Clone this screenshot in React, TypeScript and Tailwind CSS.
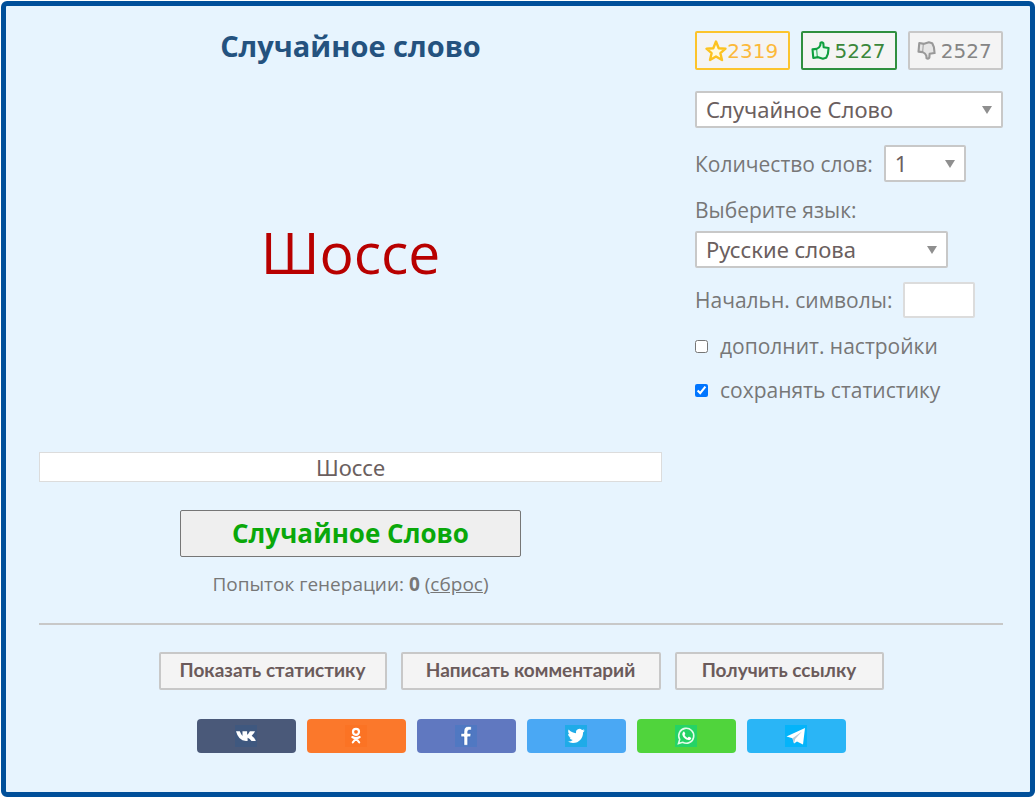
import { useState } from "react";
import type { ReactNode } from "react";

const LANGUAGES = ["Русские слова", "Английские слова"];

const selectClass =
  "h-[37px] w-full appearance-none rounded-xs border-2 border-[#c8c8c8] bg-white pb-[2px] pl-[9px] pr-7 font-['Noto_Sans',sans-serif] text-[22px] text-[#6b5f5f]";

function SelectBox({
  id,
  label,
  options,
  className,
}: {
  id: string;
  label?: string;
  options: string[];
  className: string;
}) {
  return (
    <div className={`relative ${className}`}>
      <select id={id} aria-label={label} className={selectClass}>
        {options.map((option) => (
          <option key={option}>{option}</option>
        ))}
      </select>
      <svg
        viewBox="0 0 10 8"
        className="pointer-events-none absolute right-[11px] top-[15px] h-2 w-[10px] fill-[#8f8f8f]"
      >
        <path d="M0 0h10L5 8z" />
      </svg>
    </div>
  );
}

function VoteButton({ label, className, children }: { label: string; className: string; children: ReactNode }) {
  return (
    <button
      aria-label={label}
      className={`flex h-[39px] flex-1 items-center justify-center rounded-xs border-2 bg-[#f4f4f4] pr-[2px] font-['DejaVu_Sans',sans-serif] text-[20px] ${className}`}
    >
      {children}
    </button>
  );
}

function ThumbIcon({ className, fill }: { className: string; fill: string }) {
  return (
    <svg viewBox="0 0 20 20" className={className} fill="none" stroke="currentColor" strokeWidth="2.2" strokeLinejoin="round">
      <path
        d="M1.600 8.800 6 8.300Q9 7.200 9.800 4.500L10 2Q11.500.9 13 2.400L13.300 6.600 18.500 7.300 17.800 13.500 16 17.600 12.500 18.600 7.500 17 2.400 17.800Z"
        fill={fill}
      />
      <path d="M6 8.600 6.600 16.800" strokeWidth="1" />
    </svg>
  );
}

const SHARES = [
  {
    name: "ВКонтакте",
    button: "bg-[#4a5979]",
    tile: "bg-[#3f587f]",
    icon: (
      <path
        fill="#fff"
        d="M1 6.2h3.8q1.4 3.600 2.700 4.700V6.200h4.600v3.500q1.300-.7 2.800-3.500H20q-.7 2-3.300 4.600 3.200 2 4.100 5.200h-4.300q-1.600-2.500-3.900-3.200V16h-1.700Q3.500 15.800 1 6.200Z"
      />
    ),
  },
  {
    name: "Одноклассники",
    button: "bg-[#fb782b]",
    tile: "bg-[#fb7324]",
    icon: (
      <g fill="none" stroke="#fff" strokeLinecap="round">
        <circle cx="11" cy="6.8" r="3" strokeWidth="2.2" />
        <path d="M7.3 12q3.7 2.3 7.4 0M11 13.4 7.8 17.4M11 13.4l3.2 4" strokeWidth="2.1" />
      </g>
    ),
  },
  {
    name: "Facebook",
    button: "bg-[#6078c0]",
    tile: "bg-[#5078c2]",
    icon: (
      <path
        fill="#fff"
        stroke="#285fb0"
        strokeWidth=".5"
        d="M9 20.300v-8.500H6V8.400h3V6.200Q9 1.500 13.200 1.500h3.100v3.500h-2.100q-1.500 0-1.500 1.500v1.900H16l-.5 3.400h-2.800v8.500Z"
      />
    ),
  },
  {
    name: "Twitter",
    button: "bg-[#4aa8f4]",
    tile: "bg-[#1fabe8]",
    icon: (
      <path
        fill="#fff"
        transform="translate(2.5 2.3) scale(.72)"
        d="M23.95 4.57a10 10 0 0 1-2.82.77 4.96 4.96 0 0 0 2.16-2.72c-.95.55-2 .95-3.13 1.18a4.92 4.92 0 0 0-8.38 4.48C7.69 8.09 4.07 6.13 1.64 3.16a4.82 4.82 0 0 0-.67 2.48c0 1.71.87 3.21 2.19 4.1a4.9 4.9 0 0 1-2.23-.62v.06a4.92 4.92 0 0 0 3.95 4.83 5 5 0 0 1-2.21.08 4.94 4.94 0 0 0 4.6 3.42A9.87 9.87 0 0 1 0 19.54a13.99 13.99 0 0 0 7.56 2.21c9.05 0 14-7.5 14-13.98 0-.21 0-.42-.02-.63a9.94 9.94 0 0 0 2.41-2.57Z"
      />
    ),
  },
  {
    name: "WhatsApp",
    button: "bg-[#50d43c]",
    tile: "bg-[#25d366]",
    icon: (
      <>
        <path
          fill="none"
          stroke="#e4fbe9"
          strokeWidth="1.6"
          d="M3.5 18.5l1.2-4.1a7.5 7.5 0 1 1 2.9 2.9Z"
        />
        <path
          fill="#fff"
          d="M8.6 6.6q.5-.3.8.2l.9 2q.1.4-.8 1.3 1.1 2 3 2.8l1.1-1.1q.3-.2.6 0l1.8.9q.4.3.1 1-.8 1.7-2.6 1.4Q8.700 14.200 7.300 9.700 7 7.800 8.600 6.600Z"
        />
      </>
    ),
  },
  {
    name: "Telegram",
    button: "bg-[#2ab5f6]",
    tile: "bg-[#04b4fa]",
    icon: (
      <>
        <path fill="#fff" d="M1.500 11.500 20 3 18 19.500 12 16.500 9 18.500 7.500 13.200Z" />
        <path fill="#b9cbd8" d="M7.500 13.200 17 6.500 10.200 14 9 18.500Z" />
      </>
    ),
  },
];

const footerButton =
  "h-[38px] rounded-xs border-2 border-[#c8c8c8] bg-[#f4f4f4] pb-[2px] font-['Lato','Noto_Sans',sans-serif] text-[19px] font-bold text-[#6b5b5b]";

export default function App() {
  const [word] = useState("Шоссе");
  const [attempts, setAttempts] = useState(0);
  const [extra, setExtra] = useState(false);
  const [keepStats, setKeepStats] = useState(true);

  return (
    <div className="bg-white pl-px pt-px font-['Open_Sans','Noto_Sans',sans-serif] text-[#777]">
      <main className="rounded-md border-5 border-[#004f9a] bg-[#e7f4fe] pb-[39px] pl-[33px] pr-[27px] pt-[25px]">
        <div className="flex gap-[33px] border-b-2 border-[#c8c8c8] pb-[25px]">
          <section className="flex min-w-0 flex-1 flex-col items-center">
            <h1 className="text-[29px] font-bold leading-[30px] text-[#24527f]">Случайное слово</h1>
            <div className="flex h-[391px] items-center pb-2 text-[57px] text-[#b80000]">{word}</div>
            <input
              aria-label="Результат"
              readOnly
              value={word}
              className="h-[30px] w-full border border-[#dcdcdc] bg-white text-center font-['Noto_Sans',sans-serif] text-[22px] text-[#6b5f5f]"
            />
            <button
              onClick={() => setAttempts(attempts + 1)}
              className="mt-7 h-[47px] w-[341px] rounded-xs border border-[#767676] bg-[#efefef] text-[26px] font-bold text-[#0aa80a]"
            >
              Случайное Слово
            </button>
            <p className="mt-[14px] text-[19px] leading-[27px]">
              Попыток генерации: <b>{attempts}</b> (
              <a
                href="#reset"
                className="underline"
                onClick={(e) => {
                  e.preventDefault();
                  setAttempts(0);
                }}
              >
                сброс
              </a>
              )
            </p>
          </section>

          <aside className="w-[308px] shrink-0 text-[21px] leading-7">
            <div className="flex gap-[11px]">
              <VoteButton label="В избранное 2319" className="border-[#fcc42c] text-[#fcb93a]">
                <svg viewBox="0 0 22 22" className="h-[22px] w-[22px]" fill="#fffbe0" stroke="#fcc320" strokeWidth="2.4" strokeLinejoin="round">
                  <path d="M11 1.500 13.700 8.200 20.500 8.700 15.400 13.200 17 20 11 16.500 5 20 6.600 13.200 1.500 8.700 8.300 8.200Z" />
                </svg>
                2319
              </VoteButton>
              <VoteButton label="Нравится 5227" className="gap-[5px] border-[#2f8f3f] text-[#3b873b]">
                <ThumbIcon className="h-[19px] w-[19px] text-[#0d9f3f]" fill="#e6fbef" />
                5227
              </VoteButton>
              <VoteButton label="Не нравится 2527" className="gap-[5px] border-[#c8c8c8] text-[#858585]">
                <ThumbIcon className="h-[19px] w-[19px] -scale-y-100 text-[#999]" fill="#e6e6e6" />
                2527
              </VoteButton>
            </div>

            <SelectBox
              id="generator"
              label="Генератор"
              options={["Случайное Слово"]}
              className="mt-[21px]"
            />

            <div className="mt-[17px] flex items-center gap-[11px]">
              <label htmlFor="count">Количество слов:</label>
              <SelectBox id="count" options={["1", "2", "3", "4", "5"]} className="w-[82px]" />
            </div>

            <label htmlFor="language" className="mt-[14px] block">
              Выберите язык:
            </label>
            <SelectBox id="language" options={LANGUAGES} className="mt-[7px] w-[253px]" />

            <div className="mt-[14px] flex items-center gap-[11px]">
              <label htmlFor="letters">Начальн. символы:</label>
              <input
                id="letters"
                type="text"
                className="h-9 w-[72px] rounded-xs border-2 border-[#dcdcdc] bg-white px-2 text-[21px]"
              />
            </div>

            <label className="mt-[14px] flex items-center gap-3">
              <input
                type="checkbox"
                checked={extra}
                onChange={(e) => setExtra(e.target.checked)}
                className="h-[13px] w-[13px]"
              />
              дополнит. настройки
            </label>
            <label className="mt-4 flex items-center gap-3">
              <input
                type="checkbox"
                checked={keepStats}
                onChange={(e) => setKeepStats(e.target.checked)}
                className="h-[13px] w-[13px]"
              />
              сохранять статистику
            </label>
          </aside>
        </div>

        <div className="mt-[27px] flex justify-center gap-[14px]">
          <button className={`w-[228px] ${footerButton}`}>Показать статистику</button>
          <button className={`w-[260px] ${footerButton}`}>Написать комментарий</button>
          <button className={`w-[209px] ${footerButton}`}>Получить ссылку</button>
        </div>

        <div className="mt-[29px] flex justify-center gap-[11px]">
          {SHARES.map((share) => (
            <button
              key={share.name}
              aria-label={share.name}
              className={`flex h-[34px] w-[99px] items-center justify-center rounded-sm ${share.button}`}
            >
              <svg viewBox="0 0 22 22" className={`h-[22px] w-[22px] ${share.tile}`}>
                {share.icon}
              </svg>
            </button>
          ))}
        </div>
      </main>
    </div>
  );
}
